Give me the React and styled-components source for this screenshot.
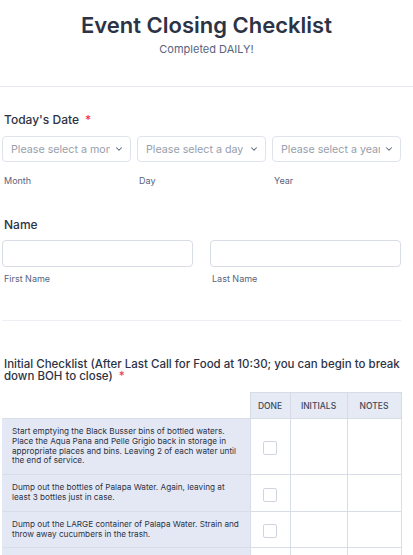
import React from 'react';
import styled, { createGlobalStyle } from 'styled-components';
import { ChevronDown } from 'lucide-react';

const GlobalStyle = createGlobalStyle`
  html, body {
    margin: 0;
    padding: 0;
    background: #ffffff;
  }

  body {
    font-family: Inter, "Noto Sans", "Liberation Sans", sans-serif;
    color: #2c3345;
  }

  * {
    box-sizing: border-box;
  }
`;

const StyledHeader = styled.header`
  padding: 12px 0 30px;
  text-align: center;
  border-bottom: 1px solid #e8eaf1;
`;

const StyledTitle = styled.h1`
  margin: 0 0 4px;
  font-size: 22px;
  line-height: 26px;
  font-weight: 600;
  color: #2c3345;
`;

const StyledSubtitle = styled.p`
  margin: 0;
  font-size: 11px;
  line-height: 14px;
  color: #57647e;
`;

const StyledForm = styled.form`
  width: 403px;
  padding: 0 2px;
`;

const StyledField = styled.div`
  padding-top: ${({ top }) => top}px;
`;

const StyledLabel = styled.div`
  padding-left: 2px;
  font-size: ${({ size }) => size || 12}px;
  line-height: ${({ lineHeight }) => lineHeight || 16}px;
  font-weight: 500;
  color: #2c3345;
  margin-bottom: ${({ gap }) => gap}px;
`;

const StyledStar = styled.span`
  color: #f23a3c;
  margin-left: 6px;
`;

const StyledRow = styled.div`
  display: grid;
  grid-template-columns: repeat(${({ columns }) => columns}, minmax(0, 1fr));
  column-gap: ${({ gap }) => gap}px;
`;

const StyledSelect = styled.div`
  position: relative;
  height: 26px;
  border: 1px solid #dfe3ec;
  border-radius: 4px;
  padding: 0 20px 0 8px;
  display: flex;
  align-items: center;
  overflow: hidden;
  white-space: nowrap;
  font-size: 10.7px;
  color: #979eab;

  svg {
    position: absolute;
    right: 6px;
    top: 7px;
    color: #57647e;
  }
`;

const StyledSelectText = styled.span`
  display: block;
  overflow: hidden;
  min-width: 0;
`;

const StyledInput = styled.input`
  display: block;
  width: 100%;
  height: 27px;
  border: 1px solid #d8dce6;
  border-radius: 4px;
  background: #ffffff;
  outline: none;
`;

const StyledSubLabel = styled.div`
  padding-left: 2px;
  margin-top: ${({ top }) => top}px;
  font-size: 9px;
  line-height: 12px;
  color: #57647e;
`;

const StyledDivider = styled.hr`
  margin: 35px 0 0;
  border: 0;
  border-top: 1px solid #eceef3;
`;

const StyledTable = styled.table`
  width: 399px;
  border-collapse: collapse;
  table-layout: fixed;
`;

const StyledHeadCell = styled.th`
  height: 26px;
  padding: 0;
  background: ${({ empty }) => (empty ? '#ffffff' : '#e6eaf4')};
  border: ${({ empty }) => (empty ? '0' : '1px solid #d6dbe6')};
  font-size: 8.5px;
  font-weight: 500;
  color: #3e4759;
  text-transform: uppercase;
  text-align: center;
`;

const StyledQuestion = styled.td`
  padding: 8px 5px 8px 10px;
  background: #e4e8f4;
  border-top: 1px solid #d8dde8;
  font-size: 8.2px;
  line-height: 9.8px;
  font-weight: 400;
  color: #2c3345;
`;

const StyledCell = styled.td`
  padding: 0;
  border: 1px solid #d8dde8;
  text-align: center;
  vertical-align: middle;
`;

const StyledCheckbox = styled.span`
  display: inline-block;
  width: 14px;
  height: 14px;
  border: 1px solid #cfd4df;
  border-radius: 2px;
  vertical-align: middle;
`;

const dateParts = [
  { placeholder: 'Please select a month', label: 'Month' },
  { placeholder: 'Please select a day', label: 'Day' },
  { placeholder: 'Please select a year', label: 'Year' },
];

const tasks = [
  'Start emptying the Black Busser bins of bottled waters. Place the Aqua Pana and Pelle Grigio back in storage in appropriate places and bins. Leaving 2 of each water until the end of service.',
  'Dump out the bottles of Palapa Water. Again, leaving at least 3 bottles just in case.',
  'Dump out the LARGE container of Palapa Water. Strain and throw away cucumbers in the trash.',
  'Break down the water station and wipe it down.',
];

const App = () => (
  <>
    <GlobalStyle />
    <StyledHeader>
      <StyledTitle>Event Closing Checklist</StyledTitle>
      <StyledSubtitle>Completed DAILY!</StyledSubtitle>
    </StyledHeader>
    <StyledForm>
      <StyledField top={25}>
        <StyledLabel gap={8}>
          Today&apos;s Date<StyledStar>*</StyledStar>
        </StyledLabel>
        <StyledRow columns={3} gap={6}>
          {dateParts.map((part) => (
            <div key={part.label}>
              <StyledSelect>
                <StyledSelectText>{part.placeholder}</StyledSelectText>
                <ChevronDown size={10} strokeWidth={2.5} />
              </StyledSelect>
              <StyledSubLabel top={13}>{part.label}</StyledSubLabel>
            </div>
          ))}
        </StyledRow>
      </StyledField>

      <StyledField top={30}>
        <StyledLabel gap={7}>Name</StyledLabel>
        <StyledRow columns={2} gap={17}>
          <div>
            <StyledInput type="text" aria-label="First Name" />
            <StyledSubLabel top={6}>First Name</StyledSubLabel>
          </div>
          <div>
            <StyledInput type="text" aria-label="Last Name" />
            <StyledSubLabel top={6}>Last Name</StyledSubLabel>
          </div>
        </StyledRow>
      </StyledField>

      <StyledDivider />

      <StyledField top={37}>
        <StyledLabel size={11.5} lineHeight={12} gap={10}>
          Initial Checklist (After Last Call for Food at 10:30; you can begin to break down BOH to close)
          <StyledStar>*</StyledStar>
        </StyledLabel>
        <StyledTable>
          <colgroup>
            <col style={{ width: 248 }} />
            <col style={{ width: 40 }} />
            <col style={{ width: 57 }} />
            <col style={{ width: 54 }} />
          </colgroup>
          <thead>
            <tr>
              <StyledHeadCell empty />
              <StyledHeadCell>Done</StyledHeadCell>
              <StyledHeadCell>Initials</StyledHeadCell>
              <StyledHeadCell>Notes</StyledHeadCell>
            </tr>
          </thead>
          <tbody>
            {tasks.map((task) => (
              <tr key={task}>
                <StyledQuestion>{task}</StyledQuestion>
                <StyledCell>
                  <StyledCheckbox />
                </StyledCell>
                <StyledCell />
                <StyledCell />
              </tr>
            ))}
          </tbody>
        </StyledTable>
      </StyledField>
    </StyledForm>
  </>
);

export default App;
